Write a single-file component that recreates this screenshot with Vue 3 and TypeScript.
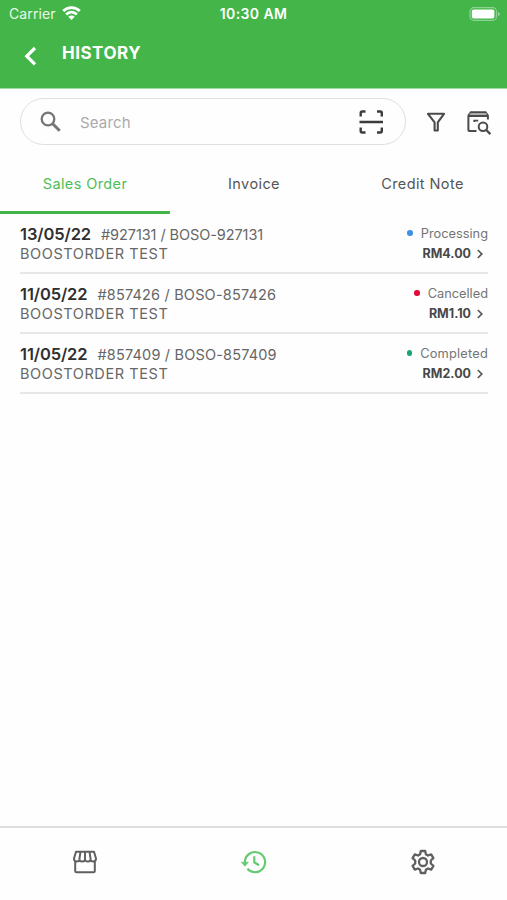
<script setup lang="ts">
import { ref } from 'vue'

interface Order {
  date: string
  reference: string
  customer: string
  status: 'Processing' | 'Cancelled' | 'Completed'
  total: string
}

const tabs = ['Sales Order', 'Invoice', 'Credit Note']
const activeTab = ref(0)

const orders: Order[] = [
  { date: '13/05/22', reference: '#927131 / BOSO-927131', customer: 'BOOSTORDER TEST', status: 'Processing', total: 'RM4.00' },
  { date: '11/05/22', reference: '#857426 / BOSO-857426', customer: 'BOOSTORDER TEST', status: 'Cancelled', total: 'RM1.10' },
  { date: '11/05/22', reference: '#857409 / BOSO-857409', customer: 'BOOSTORDER TEST', status: 'Completed', total: 'RM2.00' },
]
</script>

<template>
  <div class="screen">
    <header class="header">
      <div class="status-bar">
        <div class="carrier">
          <span>Carrier</span>
          <svg class="wifi" width="19" height="14" viewBox="0 0 19 14" fill="none" stroke="#fff" stroke-width="2.8">
            <path d="M1.2 5.1A11.8 11.8 0 0 1 17.8 5.1" />
            <path d="M4.2 8.4A7.5 7.5 0 0 1 14.8 8.4" />
            <path d="M9.500 14 6.300 10.800A4.500 4.500 0 0 1 12.700 10.800Z" fill="#fff" stroke="none" />
          </svg>
        </div>
        <span class="clock">10:30 AM</span>
        <div class="battery">
          <svg width="32" height="14" viewBox="0 0 32 14">
            <rect x="1" y=".7" width="26.5" height="12.6" rx="3.8" fill="none" stroke="#8fd393" stroke-width="1.2" />
            <rect x="2.8" y="2.5" width="22.6" height="9" rx="2" fill="#fff" />
            <path d="M29 5v4q2-.6 2-2t-2-2" fill="#91d394" />
          </svg>
        </div>
      </div>
      <div class="title-bar">
        <svg class="back" width="14" height="20" viewBox="0 0 14 20" fill="none" stroke="#fff" stroke-width="3.2">
          <path d="M12 2 3.800 10.200l8.200 8.200" />
        </svg>
        <h1>HISTORY</h1>
      </div>
    </header>

    <div class="search-row">
      <div class="search-box">
        <svg class="magnifier" width="22" height="22" viewBox="0 0 22 22" fill="none" stroke="#757575">
          <circle cx="8" cy="8" r="6.3" stroke-width="2.3" />
          <path d="m12.7 12.7 7 7" stroke-width="3" />
        </svg>
        <span class="placeholder">Search</span>
        <svg class="scan" width="26" height="26" viewBox="0 0 26 26" fill="none" stroke="#3c3c3c" stroke-width="2.4">
          <path d="M2.700 7.500V4q0-1.500 1.500-1.500H7.500M19 2.500h3.300q1.500 0 1.500 1.500v3.500M2.700 18.500V22q0 1.500 1.500 1.500H7.500M19 23.500h3.300q1.500 0 1.500-1.500v-3.500M1.500 13h23.500" />
        </svg>
      </div>
      <svg class="filter" width="20" height="20" viewBox="0 0 20 20" fill="none" stroke="#4b4b4b" stroke-width="2.1" stroke-linejoin="round">
        <path d="M2 1.800h16l-6.200 8.500V18.500H8.600v-8.200Z" />
      </svg>
      <svg class="find-order" width="26" height="26" viewBox="0 0 26 26" fill="none" stroke="#4b4b4b" stroke-width="2">
        <path d="M10.500 21H4q-1.600 0-1.600-1.600V5.500L4.800 2.200h14.800l2.300 3.300V9.500M2.400 6h19.500" />
        <path d="M3.500 4h17.500" stroke="#999" stroke-width="1.500" />
        <path d="M8.200 12v-1.300h4" stroke-width="1.700" />
        <circle cx="17" cy="16.700" r="4.300" />
        <path d="m20 19.800 4.400 4.300" stroke-width="2.300" />
      </svg>
    </div>

    <nav class="tabs">
      <button v-for="(tab, index) in tabs" :key="tab" class="tab" :class="{ active: index === activeTab }" @click="activeTab = index">
        {{ tab }}
      </button>
    </nav>

    <main class="orders">
      <article v-for="order in orders" :key="order.reference" class="order">
        <div class="details">
          <div class="heading"><strong>{{ order.date }}</strong><span class="reference">{{ order.reference }}</span></div>
          <div class="customer">{{ order.customer }}</div>
        </div>
        <div class="summary">
          <div class="status" :class="order.status.toLowerCase()"><i class="dot"></i><span>{{ order.status }}</span></div>
          <div class="total">
            <span>{{ order.total }}</span>
            <svg width="8" height="10" viewBox="0 0 8 10" fill="none" stroke="#555" stroke-width="1.700"><path d="m1.800 1 4 4-4 4" /></svg>
          </div>
        </div>
      </article>
    </main>

    <footer class="bottom-nav">
      <button aria-label="Store">
        <svg width="26" height="26" viewBox="0 0 26 26" fill="none" stroke="#606060" stroke-width="2" stroke-linejoin="round">
          <path d="M4 2.700h18l2 6.800q0 3-2.700 3-2.700 0-2.700-2.300 0 2.300-2.800 2.300T13 10.200q0 2.300-2.800 2.300t-2.800-2.300q0 2.300-2.700 2.300Q2 12.500 2 9.500ZM8.500 2.700l-1.100 7.500M13 2.700v7.500M17.500 2.700l1.100 7.500M3.200 12.500v9.200q0 1.500 1.500 1.500h16.600q1.500 0 1.500-1.500v-9.200" />
        </svg>
      </button>
      <button aria-label="History">
        <svg width="26" height="26" viewBox="0 0 26 26" fill="none" stroke="#66ca71" stroke-width="2.200">
          <path d="M3.900 14.500V13A10.100 10.100 0 1 1 6.400 19.800M13.300 7.300v6l4.700 2.900" />
          <path d="M.3 13.200h7.200l-3.600 4Z" fill="#66ca71" stroke-width=".6" />
        </svg>
      </button>
      <button aria-label="Settings">
        <svg width="26" height="26" viewBox="0 0 26 26" fill="none" stroke="#606060" stroke-width="2.300" stroke-linejoin="round">
          <path d="M10.800 2h4.400l.7 3.300 2 1.200 3.300-1.100 2.200 3.800-2.600 2.300v3l2.600 2.300-2.200 3.800-3.300-1.100-2 1.200-.7 3.300h-4.400l-.7-3.300-2-1.200-3.300 1.100-2.200-3.800 2.600-2.300v-3L2.600 9.200l2.200-3.800 3.300 1.100 2-1.200Z" />
          <circle cx="13" cy="13" r="4" />
        </svg>
      </button>
    </footer>
  </div>
</template>

<style>
body {
  margin: 0;
  background: #fefefe;
}
</style>

<style scoped>
.screen {
  display: flex;
  flex-direction: column;
  width: 507px;
  height: 900px;
  overflow: hidden;
  background: #fefefe;
  color: #555;
  font-family: Inter, "Liberation Sans", sans-serif;
}
svg {
  display: block;
  flex: none;
}
button {
  border: 0;
  padding: 0;
  background: none;
  font: inherit;
  color: inherit;
}
.header {
  height: 88px;
  flex: none;
  background: #44b649;
  border-bottom: 1px solid #9fdba3;
  color: #fff;
}
.status-bar {
  display: grid;
  grid-template-columns: 1fr auto 1fr;
  align-items: center;
  height: 27px;
  padding: 0 6px 0 9px;
}
.carrier {
  display: flex;
  align-items: center;
  gap: 6px;
  font-size: 14px;
  letter-spacing: 0.1px;
  color: #e8f8e8;
}
.wifi {
  margin-top: -2px;
}
.clock {
  margin-left: -3px;
  font-size: 14px;
  font-weight: 600;
  letter-spacing: 0.4px;
}
.battery {
  display: flex;
  justify-content: flex-end;
}
.title-bar {
  display: flex;
  align-items: flex-start;
  padding: 16px 0 0 23px;
}
.back {
  margin-top: 3px;
}
h1 {
  margin: 0 0 0 25px;
  font-size: 17px;
  line-height: 21px;
  font-weight: 700;
  letter-spacing: 0.5px;
}
.search-row {
  display: flex;
  align-items: center;
  height: 47px;
  margin: 9px 0 0 20px;
  flex: none;
}
.search-box {
  box-sizing: border-box;
  display: flex;
  align-items: center;
  width: 386px;
  height: 47px;
  padding: 0 21px 0 19px;
  border: 1px solid #dedfdf;
  border-radius: 24px;
}
.placeholder {
  flex: 1;
  margin-left: 18px;
  padding-top: 1px;
  font-size: 15px;
  letter-spacing: 0.15px;
  color: #aaa;
}
.filter {
  margin-left: 20px;
}
.find-order {
  margin-left: 20px;
  margin-top: 2px;
}
.tabs {
  display: grid;
  grid-template-columns: 170px 168px 169px;
  height: 69px;
  flex: none;
}
.tab {
  padding-top: 11px;
  border-bottom: 3px solid transparent;
  font-size: 14.500px;
  letter-spacing: 0.4px;
}
.tab.active {
  color: #52bd58;
  border-color: #44b649;
}
.orders {
  flex: 1;
  padding: 0 19px 0 20px;
}
.order {
  box-sizing: border-box;
  display: flex;
  justify-content: space-between;
  height: 60px;
  padding-top: 10px;
  border-bottom: 2px solid #e7e7e7;
}
.heading {
  display: flex;
  align-items: center;
  gap: 10px;
  height: 20px;
  font-size: 14.500px;
  color: #666;
}
.heading strong {
  font-size: 16.500px;
  font-weight: 600;
  letter-spacing: -0.1px;
  color: #2f2f2f;
}
.reference {
  letter-spacing: 0.18px;
}
.order:first-child .reference {
  letter-spacing: -0.08px;
}
.customer {
  font-size: 14.500px;
  line-height: 19px;
  letter-spacing: 0.58px;
  color: #666;
}
.summary {
  display: flex;
  flex-direction: column;
  align-items: flex-end;
}
.status {
  display: flex;
  align-items: center;
  gap: 8px;
  height: 19px;
  font-size: 12.800px;
  color: #747474;
}
.completed {
  letter-spacing: 0.2px;
}
.dot {
  width: 5.500px;
  height: 5.500px;
  border-radius: 50%;
  margin-top: -1px;
}
.processing .dot {
  background: #3d92e8;
}
.cancelled .dot {
  background: #e20a38;
}
.completed .dot {
  background: #14a873;
}
.total {
  display: flex;
  align-items: center;
  gap: 5px;
  height: 21px;
  padding-right: 4px;
  font-size: 12.500px;
  font-weight: 700;
  color: #484848;
}
.bottom-nav {
  box-sizing: border-box;
  display: grid;
  grid-template-columns: repeat(3, 1fr);
  height: 74px;
  flex: none;
  padding-bottom: 4px;
  border-top: 2px solid #dedede;
}
.bottom-nav button {
  display: flex;
  align-items: center;
  justify-content: center;
}
</style>
